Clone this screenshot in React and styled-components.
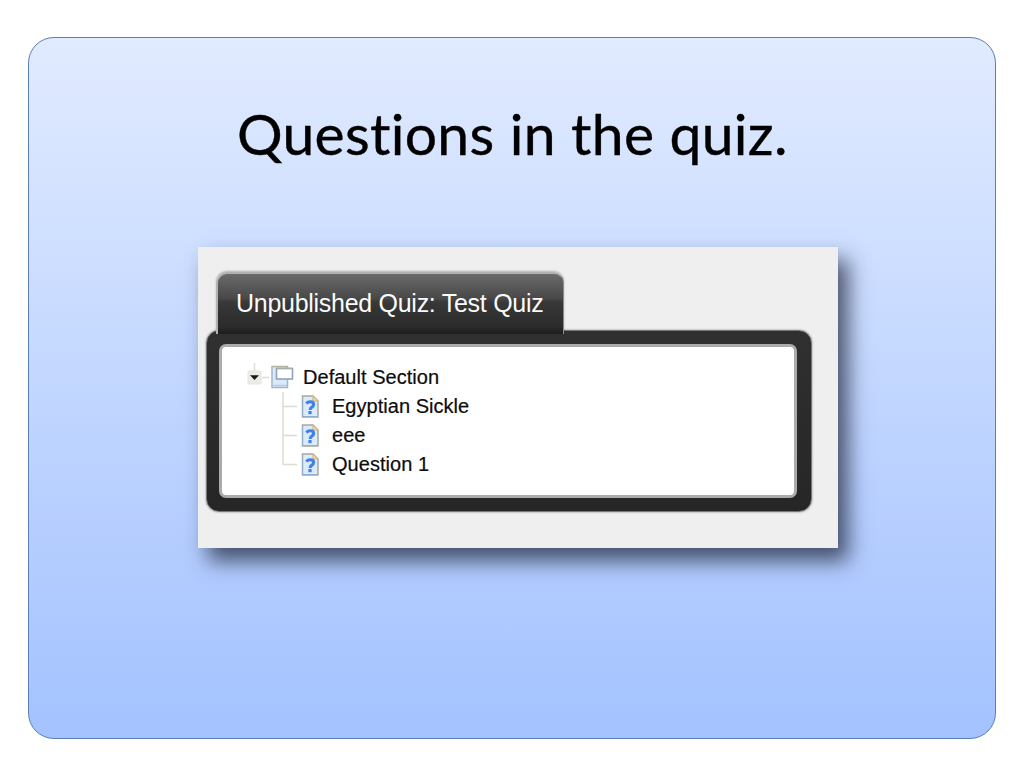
import React from 'react'
import styled, { createGlobalStyle } from 'styled-components'

const GlobalStyle = createGlobalStyle`
* {
  box-sizing: border-box;
}
body {
  margin: 0;
  background: #FFFFFF;
}
`

const Page = styled.div`
width: 1024px;
height: 768px;
padding: 37px 28px 29px;
`

const Slide = styled.main`
display: flex;
flex-direction: column;
width: 968px;
height: 702px;
border: 1px solid #5A7FB5;
border-radius: 26px;
background: linear-gradient(180deg, #E1EBFF 0%, #A3C2FF 100%);
`

const Title = styled.h1`
margin: 60px 0 0 208px;
height: 149px;
font-family: Lato, "Open Sans", sans-serif;
font-size: 57px;
font-weight: 400;
line-height: 70px;
letter-spacing: 0.3px;
word-spacing: 0.4px;
-webkit-text-stroke: 0.4px #000;
white-space: nowrap;
color: #000;
`

const Screenshot = styled.section`
width: 640px;
height: 301px;
margin-left: 169px;
padding: 25px 26px 0 8px;
background: #EFEFEF;
box-shadow: 10px 13px 20px rgba(25, 30, 50, 0.72);
font-family: "Liberation Sans", Arial, sans-serif;
`

const Tab = styled.header`
position: relative;
z-index: 1;
width: 348px;
height: 62px;
margin-left: 10px;
padding-left: 18px;
border: 2px solid #B2B2B2;
border-right: 1px solid #8C8C8C;
border-bottom: 0;
border-radius: 11px 10px 0 0;
box-shadow: 0 -1px 2px rgba(0, 0, 0, 0.25);
background: linear-gradient(180deg, #6A6A6A 0%, #484848 41%, #383838 47%, #2B2B2B 88%, #1D1D1D 100%);
`

const TabTitle = styled.h2`
margin: 0;
font-size: 25px;
font-weight: 400;
line-height: 58px;
letter-spacing: -0.28px;
white-space: nowrap;
color: #FAFAFA;
`

const Panel = styled.div`
width: 606px;
height: 182px;
margin-top: -4px;
padding: 13px 14px 13px 12px;
border: 1px solid #777777;
border-radius: 13px;
background: linear-gradient(180deg, #303030, #262626);
box-shadow: 0 0 2px rgba(0, 0, 0, 0.5);
`

const PanelBody = styled.div`
height: 154px;
padding: 16px 0 0 25px;
border: 3px solid #ABABAB;
border-radius: 7px;
background: #FFFFFF;
`

const Tree = styled.ul`
margin: 0;
padding: 0;
list-style: none;
`

const Row = styled.li`
display: flex;
align-items: center;
height: 29px;
`

const Label = styled.span`
margin-left: ${(props) => (props.$root ? '9px' : '13px')};
font-size: 20px;
line-height: 29px;
letter-spacing: 0.03px;
white-space: nowrap;
color: #0C0C0C;
-webkit-text-stroke: 0.2px #0C0C0C;
`

const Icon = styled.svg`
display: block;
flex: none;
`

const questions = ['Egyptian Sickle', 'eee', 'Question 1']

const Toggle = () => (
  <Icon width="23" height="29" viewBox="0 0 23 29">
    <path d="M7.5 0V8M15 14.5H22" stroke="#DEDCD5" strokeWidth="1.4" fill="none" />
    <rect x="1" y="8" width="13" height="13" rx="1" fill="#ECEBE7" stroke="#E6E5E1" />
    <path d="M3 12.2H12L7.5 17Z" fill="#181818" />
  </Icon>
)

const SectionIcon = () => (
  <Icon width="24" height="29" viewBox="0 0 24 29">
    <path d="M2 3.5H17.5V24.5H2Z" fill="#DCE9FA" stroke="#A5B5C4" strokeWidth="1.5" />
    <path d="M3.5 22.5H17" stroke="#B5CDEC" strokeWidth="1.6" />
    <rect x="6.5" y="5.5" width="16" height="10.5" fill="#FFFFFF" stroke="#8FA3BC" strokeWidth="1.6" />
    <path d="M2 3.5H17.5M6.5 5.2H22.5" stroke="#B5B69F" />
  </Icon>
)

// elbow line on the left of a question, cut short on the last one
const Branch = ({ last }) => (
  <Icon width="53" height="29" viewBox="0 0 53 29">
    <path d={last ? 'M36 0V14.5H50' : 'M36 0V29M36 14.5H50'} stroke="#DEDCD0" strokeWidth="1.5" fill="none" />
  </Icon>
)

const QuestionIcon = () => (
  <Icon width="19" height="29" viewBox="0 0 19 29">
    <path d="M2.5 4H13L18 9V25H2.5Z" fill="#DCEBFC" stroke="#A7A99A" strokeWidth="1.5" />
    <path d="M2.5 5V24.5H17.5" fill="none" stroke="#91AFC9" />
    <path d="M13 4L18 9H13Z" fill="#F3D596" stroke="#CDB27A" />
    <path d="M6.4 11.6Q7.6 9.8 10.2 9.8Q13.6 9.8 13.6 12.4Q13.6 14.2 11.6 15.3Q10.3 16.1 10.2 18" fill="none" stroke="#3F7FEE" strokeWidth="3.1" />
    <path d="M8.4 19H11.6V22.2H8.4Z" fill="#3F7FEE" />
  </Icon>
)

const App = () => {
  return (
    <>
    <GlobalStyle />
    <Page>
    <Slide>
<Title>Questions in the quiz.</Title>
<Screenshot>
<Tab>
<TabTitle>Unpublished Quiz: Test Quiz</TabTitle>
</Tab>
<Panel>
<PanelBody>
<Tree>
<Row>
<Toggle />
<SectionIcon />
<Label $root>Default Section</Label>
</Row>
{questions.map((question, index) => (
  <Row key={question}>
    <Branch last={index === questions.length - 1} />
    <QuestionIcon />
    <Label>{question}</Label>
  </Row>
))}
</Tree>
</PanelBody>
</Panel>
</Screenshot>
    </Slide>
    </Page>
    </>
  )
}

export default App
